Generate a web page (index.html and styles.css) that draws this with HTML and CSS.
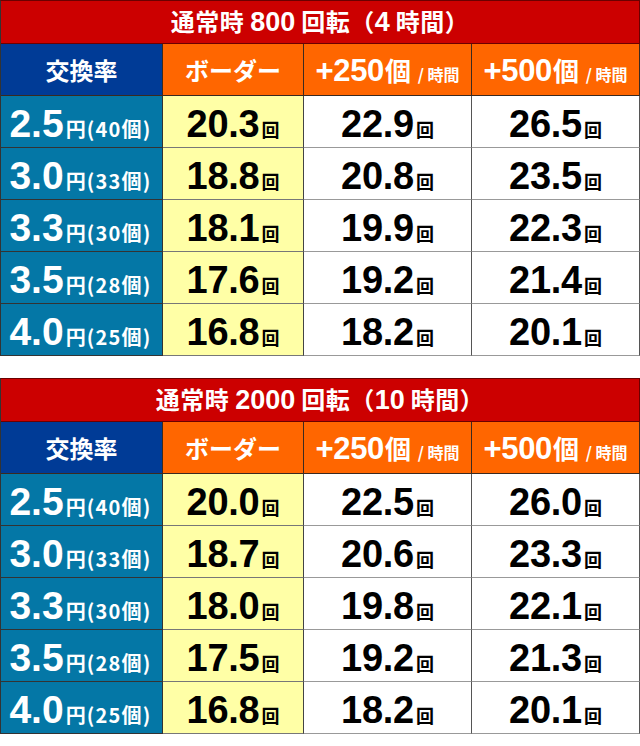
FILE: index.html
```html
<!DOCTYPE html>
<html lang="ja">
<head>
<meta charset="utf-8">
<title>ボーダー</title>
<link rel="stylesheet" href="styles.css">
</head>
<body>
<div class="page">
  <div class="tbl">
    <div class="title">通常時 <span class="tn">800</span> 回転（<span class="tn">4</span> 時間）</div>
    <div class="h h-rate">交換率</div>
    <div class="h h-org">ボーダー</div>
    <div class="h h-org"><span class="hn">+250<span class="hk">個</span></span><span class="hs">/ 時間</span></div>
    <div class="h h-org"><span class="hn">+500<span class="hk">個</span></span><span class="hs">/ 時間</span></div>

    <div class="c rate"><span class="rn">2.5</span><span class="ru">円(40個)</span></div>
    <div class="c bd"><span class="n">20.3</span><span class="k">回</span></div>
    <div class="c w"><span class="n">22.9</span><span class="k">回</span></div>
    <div class="c w"><span class="n">26.5</span><span class="k">回</span></div>

    <div class="c rate"><span class="rn">3.0</span><span class="ru">円(33個)</span></div>
    <div class="c bd"><span class="n">18.8</span><span class="k">回</span></div>
    <div class="c w"><span class="n">20.8</span><span class="k">回</span></div>
    <div class="c w"><span class="n">23.5</span><span class="k">回</span></div>

    <div class="c rate"><span class="rn">3.3</span><span class="ru">円(30個)</span></div>
    <div class="c bd"><span class="n">18.1</span><span class="k">回</span></div>
    <div class="c w"><span class="n">19.9</span><span class="k">回</span></div>
    <div class="c w"><span class="n">22.3</span><span class="k">回</span></div>

    <div class="c rate"><span class="rn">3.5</span><span class="ru">円(28個)</span></div>
    <div class="c bd"><span class="n">17.6</span><span class="k">回</span></div>
    <div class="c w"><span class="n">19.2</span><span class="k">回</span></div>
    <div class="c w"><span class="n">21.4</span><span class="k">回</span></div>

    <div class="c rate"><span class="rn">4.0</span><span class="ru">円(25個)</span></div>
    <div class="c bd"><span class="n">16.8</span><span class="k">回</span></div>
    <div class="c w"><span class="n">18.2</span><span class="k">回</span></div>
    <div class="c w"><span class="n">20.1</span><span class="k">回</span></div>
  </div>

  <div class="tbl">
    <div class="title">通常時 <span class="tn">2000</span> 回転（<span class="tn">10</span> 時間）</div>
    <div class="h h-rate">交換率</div>
    <div class="h h-org">ボーダー</div>
    <div class="h h-org"><span class="hn">+250<span class="hk">個</span></span><span class="hs">/ 時間</span></div>
    <div class="h h-org"><span class="hn">+500<span class="hk">個</span></span><span class="hs">/ 時間</span></div>

    <div class="c rate"><span class="rn">2.5</span><span class="ru">円(40個)</span></div>
    <div class="c bd"><span class="n">20.0</span><span class="k">回</span></div>
    <div class="c w"><span class="n">22.5</span><span class="k">回</span></div>
    <div class="c w"><span class="n">26.0</span><span class="k">回</span></div>

    <div class="c rate"><span class="rn">3.0</span><span class="ru">円(33個)</span></div>
    <div class="c bd"><span class="n">18.7</span><span class="k">回</span></div>
    <div class="c w"><span class="n">20.6</span><span class="k">回</span></div>
    <div class="c w"><span class="n">23.3</span><span class="k">回</span></div>

    <div class="c rate"><span class="rn">3.3</span><span class="ru">円(30個)</span></div>
    <div class="c bd"><span class="n">18.0</span><span class="k">回</span></div>
    <div class="c w"><span class="n">19.8</span><span class="k">回</span></div>
    <div class="c w"><span class="n">22.1</span><span class="k">回</span></div>

    <div class="c rate"><span class="rn">3.5</span><span class="ru">円(28個)</span></div>
    <div class="c bd"><span class="n">17.5</span><span class="k">回</span></div>
    <div class="c w"><span class="n">19.2</span><span class="k">回</span></div>
    <div class="c w"><span class="n">21.3</span><span class="k">回</span></div>

    <div class="c rate"><span class="rn">4.0</span><span class="ru">円(25個)</span></div>
    <div class="c bd"><span class="n">16.8</span><span class="k">回</span></div>
    <div class="c w"><span class="n">18.2</span><span class="k">回</span></div>
    <div class="c w"><span class="n">20.1</span><span class="k">回</span></div>
  </div>
</div>
</body>
</html>
```

FILE: styles.css
```css
html, body {
  margin: 0;
  padding: 0;
  background: #ffffff;
}

.page {
  width: 640px;
  display: flex;
  flex-direction: column;
  gap: 22px;
  font-family: "Noto Sans CJK JP", "Noto Sans", sans-serif;
}

.tbl {
  display: grid;
  grid-template-columns: 162px 141px 168px 168px;
  grid-template-rows: 43px 52px repeat(5, 52px);
  border-top: 1px solid #6b0000;
  border-left: 1px solid #333;
}

.tbl > div {
  box-sizing: border-box;
  display: flex;
  align-items: center;
  justify-content: center;
  white-space: nowrap;
}

.title {
  grid-column: 1 / 5;
  background: #cc0000;
  color: #fff;
  font-weight: 700;
  font-size: 24px;
  letter-spacing: 0.5px;
  border-right: 1px solid #6b0000;
  border-bottom: 1px solid #6b0000;
  align-items: baseline !important;
  padding-top: 2px;
  white-space: pre !important;
  line-height: 36px;
}

.tn {
  font-family: "Liberation Sans", Arial, sans-serif;
  font-size: 27px;
  letter-spacing: 0;
}

.h {
  color: #fff;
  font-weight: 700;
  font-size: 24px;
  border-right: 1px solid #3a2a20;
  border-bottom: 1px solid #3a2a20;
}

.h-rate {
  background: #003b96;
}

.h-org {
  background: #ff6600;
  align-items: baseline !important;
  padding-top: 6px;
}

.h-org:nth-child(3) {
  align-items: center !important;
  padding-top: 0;
}

.hn {
  font-family: "Liberation Sans", Arial, sans-serif;
  font-size: 31px;
  line-height: 40px;
  letter-spacing: -0.3px;
}

.hk {
  font-family: "Noto Sans CJK JP", sans-serif;
  font-size: 26px;
  margin-left: 1px;
}

.hs {
  font-size: 16px;
  margin-left: 7px;
}

.c {
  border-right: 1px solid #555;
  border-bottom: 1px solid #777;
}

.rate {
  background: #0477a6;
  color: #fff;
  border-right-color: #333;
  border-bottom-color: #333;
  align-items: baseline !important;
  padding-top: 5px;
  padding-right: 2px;
}

.rn {
  font-family: "Liberation Sans", Arial, sans-serif;
  font-weight: 700;
  font-size: 39px;
  line-height: 46px;
}

.ru {
  font-family: "Noto Sans CJK JP", sans-serif;
  font-weight: 700;
  font-size: 20px;
  margin-left: 2px;
  letter-spacing: 1.2px;
}

.bd {
  background: #ffffa6;
  border-right-color: #444;
  border-bottom-color: #777;
}

.w {
  background: #fff;
  border-bottom-color: #999;
}

.bd, .w {
  align-items: baseline !important;
  padding-top: 5px;
  color: #000;
}

.n {
  font-family: "Liberation Sans", Arial, sans-serif;
  font-weight: 700;
  font-size: 38px;
  line-height: 46px;
  letter-spacing: -0.3px;
}

.k {
  font-family: "Noto Sans CJK JP", sans-serif;
  font-weight: 700;
  font-size: 18px;
  margin-left: 2px;
}
```
